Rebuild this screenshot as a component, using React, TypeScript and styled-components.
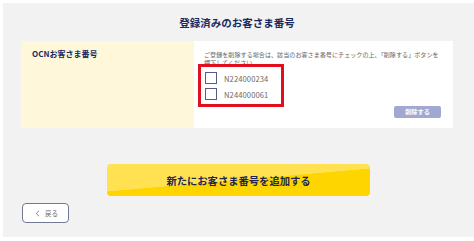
import styled, { createGlobalStyle } from 'styled-components';

const GlobalStyle = createGlobalStyle`
  html, body {
    margin: 0;
    padding: 0;
    background: #ffffff;
  }
  body {
    font-family: "Noto Sans CJK JP", "Noto Sans", sans-serif;
  }
`;

const Page = styled.main`
  margin: 3px 0 4px 3px;
  height: 234px;
  background: #f2f2f3;
  padding: 0 21px 0 18px;
  box-sizing: border-box;
  display: flex;
  flex-direction: column;
`;

const Title = styled.h1`
  margin: 12px 0 0;
  height: 26px;
  line-height: 16px;
  font-size: 10.5px;
  font-weight: 700;
  color: #1b2a5e;
  text-align: center;
`;

const Table = styled.div`
  display: grid;
  grid-template-columns: 173px 1fr;
  height: 87px;
`;

const HeadCell = styled.div`
  background: #fef7da;
  padding: 7px 11px;
  font-size: 8px;
  line-height: 11px;
  font-weight: 700;
  color: #1b2a5e;
`;

const BodyCell = styled.div`
  background: #ffffff;
  padding: 10px 12px 10px 10px;
  display: flex;
  flex-direction: column;
`;

const Note = styled.p`
  margin: 0;
  font-size: 6.1px;
  line-height: 8px;
  color: #666666;
  white-space: nowrap;
`;

const CheckList = styled.div`
  position: relative;
  margin-top: 5px;
  display: flex;
  flex-direction: column;
  gap: 4px;
`;

const Highlight = styled.div`
  position: absolute;
  left: -6px;
  top: -8px;
  width: 86px;
  height: 43px;
  border: 3px solid #e2101e;
  box-sizing: border-box;
  pointer-events: none;
`;

const CheckRow = styled.label`
  display: flex;
  align-items: center;
  gap: 7px;
  height: 12px;
  padding-left: 1px;
`;

const Box = styled.span`
  width: 12px;
  height: 12px;
  box-sizing: border-box;
  border: 1px solid #545c8c;
  background: #ffffff;
`;

const Number = styled.span`
  font-size: 7.6px;
  color: #6a6a6a;
  letter-spacing: 0.1px;
`;

const Actions = styled.div`
  margin-top: auto;
  display: flex;
  justify-content: flex-end;
`;

const DeleteButton = styled.button`
  width: 47px;
  height: 12px;
  border: none;
  border-radius: 2px;
  background: #a2a9d1;
  color: #ffffff;
  font-family: inherit;
  font-size: 6.2px;
  font-weight: 700;
  padding: 0;
  line-height: 12px;
`;

const AddButton = styled.button`
  align-self: center;
  margin: 36px 0 0 3px;
  width: 263px;
  height: 32px;
  border: none;
  border-radius: 4px;
  background: linear-gradient(175deg, #ffe152 49.5%, #ffd500 50.5%);
  color: #1d2750;
  font-family: inherit;
  font-size: 10.3px;
  font-weight: 700;
  padding: 0;
`;

const BackButton = styled.button`
  align-self: flex-start;
  margin: 7px 0 0 1px;
  width: 47px;
  height: 20px;
  box-sizing: border-box;
  border: 1px solid #737899;
  border-radius: 4px;
  background: #ffffff;
  color: #6a6a6a;
  font-family: inherit;
  font-size: 6.5px;
  padding: 0 0 0 2px;
  display: flex;
  align-items: center;
  justify-content: center;
  gap: 5px;
`;

export default function App() {
  return (
    <>
      <GlobalStyle />
      <Page>
        <Title>登録済みのお客さま番号</Title>
        <Table>
          <HeadCell>OCNお客さま番号</HeadCell>
          <BodyCell>
            <Note>
              ご登録を削除する場合は、該当のお客さま番号にチェックの上、「削除する」ボタンを
              <br />
              押下してください。
            </Note>
            <CheckList>
              <Highlight />
              <CheckRow>
                <Box />
                <Number>N224000234</Number>
              </CheckRow>
              <CheckRow>
                <Box />
                <Number>N244000061</Number>
              </CheckRow>
            </CheckList>
            <Actions>
              <DeleteButton type="button">削除する</DeleteButton>
            </Actions>
          </BodyCell>
        </Table>
        <AddButton type="button">新たにお客さま番号を追加する</AddButton>
        <BackButton type="button">
          <svg width="5" height="7" viewBox="0 0 5 7" fill="none" aria-hidden="true">
            <path d="M4 0.8L1.2 3.5L4 6.2" stroke="#6a6a6a" strokeWidth="0.8" />
          </svg>
          戻る
        </BackButton>
      </Page>
    </>
  );
}
